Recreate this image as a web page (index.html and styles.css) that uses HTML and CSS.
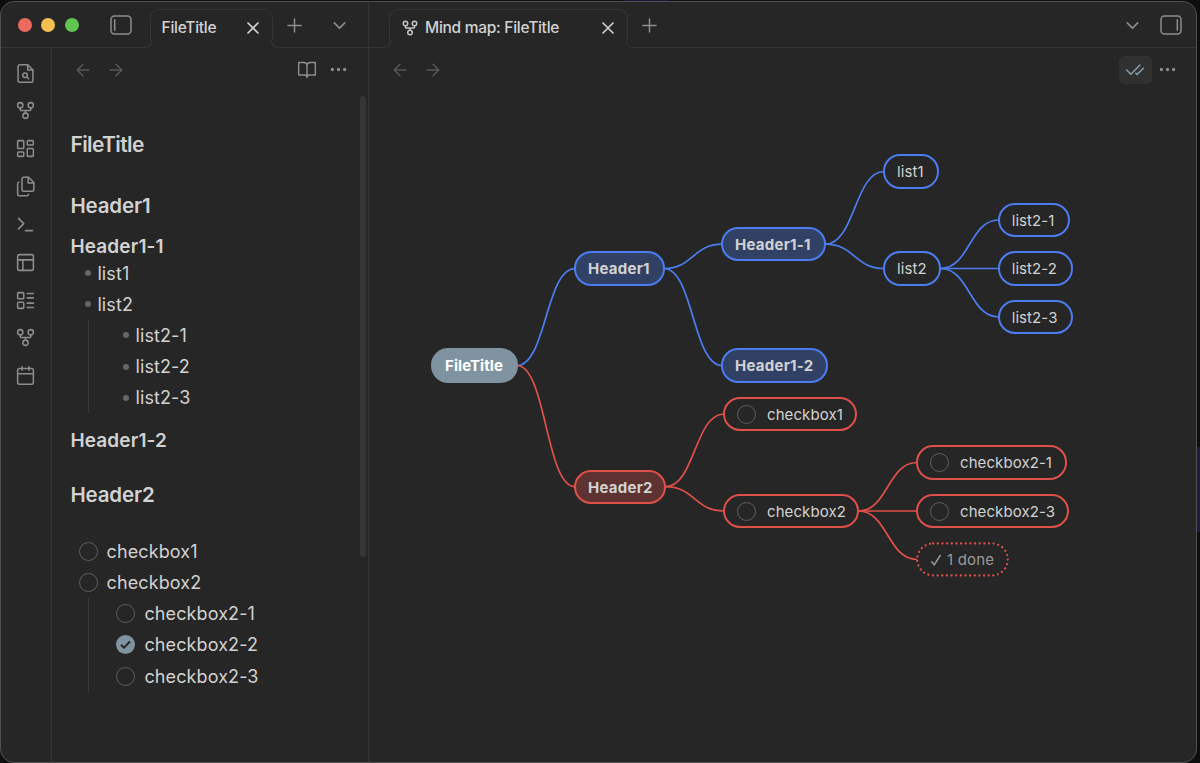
FILE: index.html
```
<!DOCTYPE html>
<html lang="en">
<head>
    <meta charset="UTF-8">
    <meta name="viewport" content="width=device-width, initial-scale=1.0">
    <title>Mind map: FileTitle</title>
    <link rel="stylesheet" href="styles.css">
</head>
<body>
    <!-- shared icons -->
    <svg class="sprite">
        <symbol id="fork" viewBox="0 0 24 24"><circle cx="12" cy="18" r="3"/><circle cx="6" cy="6" r="3"/><circle cx="18" cy="6" r="3"/><path d="M18 9v2c0 .6-.4 1-1 1H7c-.6 0-1-.4-1-1V9M12 12v3"/></symbol>
        <symbol id="close" viewBox="0 0 24 24"><path d="M18 6 6 18M6 6l12 12"/></symbol>
        <symbol id="plus" viewBox="0 0 24 24"><path d="M4.500 12h15M12 4.500v15"/></symbol>
        <symbol id="down" viewBox="0 0 24 24"><path d="m6 9 6 6 6-6"/></symbol>
        <symbol id="back" viewBox="0 0 24 24"><path d="m12 19-7-7 7-7M19 12H5"/></symbol>
        <symbol id="forward" viewBox="0 0 24 24"><path d="M5 12h14M12 5l7 7-7 7"/></symbol>
        <symbol id="dots" viewBox="0 0 24 24"><circle cx="5" cy="12" r="1"/><circle cx="12" cy="12" r="1"/><circle cx="19" cy="12" r="1"/></symbol>
        <symbol id="sidebar" viewBox="0 0 22 20"><rect x="1" y="1" width="20" height="18" rx="3.5"/><path d="M4.700 4.800v10.400"/></symbol>
    </svg>

    <div class="window">
        <header class="titlebar">
            <div class="titlebar-left">
                <div class="lights"><i class="red"></i><i class="yellow"></i><i class="green"></i></div>
                <svg class="icon sidebar-icon"><use href="#sidebar"/></svg>
                <div class="tab tab-file">
                    <span>FileTitle</span>
                    <svg class="icon close"><use href="#close"/></svg>
                </div>
                <svg class="icon new-tab"><use href="#plus"/></svg>
                <svg class="icon tab-list"><use href="#down"/></svg>
            </div>
            <div class="titlebar-right">
                <div class="tab tab-map">
                    <svg class="icon tab-icon"><use href="#fork"/></svg>
                    <span>Mind map: FileTitle</span>
                    <svg class="icon close"><use href="#close"/></svg>
                </div>
                <svg class="icon new-tab"><use href="#plus"/></svg>
                <svg class="icon tab-list"><use href="#down"/></svg>
                <svg class="icon sidebar-icon flip"><use href="#sidebar"/></svg>
            </div>
        </header>

        <div class="workspace">
            <nav class="ribbon">
                <svg class="icon" viewBox="0 0 24 24"><path d="M14.500 2H5.500a2 2 0 0 0-2 2v16a2 2 0 0 0 2 2h13a2 2 0 0 0 2-2V8z"/><path d="M14.500 2v6h6"/><circle cx="11.500" cy="14" r="2.600"/><path d="m13.500 16 2 2"/></svg>
                <svg class="icon"><use href="#fork"/></svg>
                <svg class="icon" viewBox="0 0 24 24"><rect x="3" y="3" width="7" height="9" rx="1"/><rect x="14" y="3" width="7" height="5" rx="1"/><rect x="14" y="12" width="7" height="9" rx="1"/><rect x="3" y="16" width="7" height="5" rx="1"/></svg>
                <svg class="icon" viewBox="0 0 24 24"><path d="M15.500 1.500H10a2 2 0 0 0-2 2v12a2 2 0 0 0 2 2h9.500a2 2 0 0 0 2-2v-8z"/><path d="M15 1.500V8h6.500"/><path d="M4.500 7A2 2 0 0 0 3 9v11.500a2 2 0 0 0 2 2h8.500a2 2 0 0 0 2-1.500"/></svg>
                <svg class="icon" viewBox="0 0 24 24"><path d="m4 17 6-6-6-6M12 19h8"/></svg>
                <svg class="icon" viewBox="0 0 24 24"><rect x="3" y="3" width="18" height="18" rx="2"/><path d="M3 9h18M9 21V9"/></svg>
                <svg class="icon" viewBox="0 0 24 24"><rect x="3" y="3" width="7" height="7" rx="1"/><rect x="3" y="14" width="7" height="7" rx="1"/><path d="M14 4h7M14 9h7M14 15h7M14 20h7"/></svg>
                <svg class="icon"><use href="#fork"/></svg>
                <svg class="icon" viewBox="0 0 24 24"><rect x="3" y="4" width="18" height="18" rx="2"/><path d="M16 2v4M8 2v4M3 10h18"/></svg>
            </nav>

            <section class="pane note">
                <div class="view-header">
                    <svg class="icon nav"><use href="#back"/></svg>
                    <svg class="icon nav"><use href="#forward"/></svg>
                    <svg class="icon book" viewBox="0 0 24 24"><path d="M2 3h6a4 4 0 0 1 4 4v14a3 3 0 0 0-3-3H2zM22 3h-6a4 4 0 0 0-4 4v14a3 3 0 0 1 3-3h7z"/></svg>
                    <svg class="icon more"><use href="#dots"/></svg>
                </div>
                <div class="note-body">
                    <h1>FileTitle</h1>
                    <h2>Header1</h2>
                    <h3>Header1-1</h3>
                    <ul class="bullets">
                        <li>list1</li>
                        <li>list2</li>
                    </ul>
                    <ul class="bullets nested">
                        <li>list2-1</li>
                        <li>list2-2</li>
                        <li>list2-3</li>
                    </ul>
                    <h3 class="spaced">Header1-2</h3>
                    <h2 class="last">Header2</h2>
                    <ul class="tasks">
                        <li><i class="box"></i>checkbox1</li>
                        <li><i class="box"></i>checkbox2</li>
                    </ul>
                    <ul class="tasks nested">
                        <li><i class="box"></i>checkbox2-1</li>
                        <li><svg class="box checked" viewBox="0 0 19 19"><path d="m5 9.800 3 2.900 6-6.200"/></svg>checkbox2-2</li>
                        <li><i class="box"></i>checkbox2-3</li>
                    </ul>
                </div>
                <div class="scrollbar"></div>
            </section>

            <section class="pane map">
                <div class="view-header">
                    <svg class="icon nav"><use href="#back"/></svg>
                    <svg class="icon nav"><use href="#forward"/></svg>
                    <button class="toggle"><svg class="icon" viewBox="0 0 24 24"><path d="M18 6 7 17l-5-5M22 10l-7.500 7.500L13 16"/></svg></button>
                    <svg class="icon more"><use href="#dots"/></svg>
                </div>
                <div class="canvas" id="canvas">
                    <svg class="edges" id="edges"></svg>
                </div>
            </section>
        </div>
    </div>

    <script>
        // x = left edge, y = vertical centre, w = width
        const nodes = [
            { id: "root", text: "FileTitle", x: 62, y: 272.5, w: 86.5, cls: "root" },
            { id: "h1", parent: "root", text: "Header1", x: 205, y: 175.5, w: 90.5, cls: "blue heading" },
            { id: "h1-1", parent: "h1", text: "Header1-1", x: 352, y: 151.2, w: 105, cls: "blue heading" },
            { id: "h1-2", parent: "h1", text: "Header1-2", x: 352, y: 272.5, w: 106.8, cls: "blue heading" },
            { id: "l1", parent: "h1-1", text: "list1", x: 514, y: 78.5, w: 56, cls: "blue" },
            { id: "l2", parent: "h1-1", text: "list2", x: 514, y: 175.5, w: 58, cls: "blue" },
            { id: "l2-1", parent: "l2", text: "list2-1", x: 628.7, y: 127, w: 72.5, cls: "blue" },
            { id: "l2-2", parent: "l2", text: "list2-2", x: 628.7, y: 175.5, w: 75, cls: "blue" },
            { id: "l2-3", parent: "l2", text: "list2-3", x: 628.7, y: 224, w: 75, cls: "blue" },
            { id: "h2", parent: "root", text: "Header2", x: 205, y: 393.7, w: 92, cls: "red heading" },
            { id: "c1", parent: "h2", text: "checkbox1", x: 354, y: 321, w: 134, cls: "red", box: true },
            { id: "c2", parent: "h2", text: "checkbox2", x: 354, y: 418, w: 136, cls: "red", box: true },
            { id: "c2-1", parent: "c2", text: "checkbox2-1", x: 547, y: 369.5, w: 150.5, cls: "red", box: true },
            { id: "c2-3", parent: "c2", text: "checkbox2-3", x: 547, y: 418, w: 153, cls: "red", box: true },
            { id: "done", parent: "c2", text: "1 done", x: 547, y: 466.5, w: 93, cls: "red done" }
        ];

        const canvas = document.getElementById("canvas");
        let paths = "";

        nodes.forEach(node => {
            const el = document.createElement("div");
            el.className = "node " + node.cls;
            el.style.left = node.x + "px";
            el.style.top = (node.y - 17.2) + "px";
            el.style.width = node.w + "px";
            let mark = "";
            if (node.box) mark = '<i class="box"></i>';
            if (node.id === "done") {
                mark = '<svg class="tick" viewBox="0 0 12 12"><path d="m1.200 7.200 3 3.600L10.500 1"/></svg>';
                // dotted outline with even spacing round the corners
                paths += `<rect class="red dotted" x="${node.x + 1.2}" y="${node.y - 16}" width="${node.w - 2.4}" height="32" rx="16"/>`;
            }
            el.innerHTML = mark + "<span>" + node.text + "</span>";
            canvas.appendChild(el);

            const parent = nodes.find(n => n.id === node.parent);
            if (parent) {
                const x1 = parent.x + parent.w - 0.5;
                const x2 = node.x + 1;
                const mid = (x1 + x2) / 2;
                const color = node.cls.includes("blue") ? "blue" : "red";
                paths += `<path class="${color}" d="M${x1} ${parent.y}C${mid} ${parent.y} ${mid} ${node.y} ${x2} ${node.y}"/>`;
            }
        });

        document.getElementById("edges").innerHTML = paths;
    </script>
</body>
</html>
```
FILE: styles.css
```
* {
    box-sizing: border-box;
}
body {
    margin: 0;
    height: 763px;
    padding: 1px 3px 0 0;
    overflow: hidden;
    background:
        linear-gradient(#1f1a3c, #1f1a3c) 1197px 447px / 3px 85px no-repeat,
        linear-gradient(#1f1a3c, #1f1a3c) 623px 0 / 46px 1px no-repeat,
        #0e0e10;
    color: #d2d2d2;
    font-family: 'Inter', 'Liberation Sans', sans-serif;
}
h1, h2, h3, ul {
    margin: 0;
    padding: 0;
}
.sprite {
    display: none;
}
.icon {
    width: 21px;
    height: 21px;
    flex: none;
    fill: none;
    stroke: #8d8d8d;
    stroke-width: 1.75;
    stroke-linecap: round;
    stroke-linejoin: round;
}
.window {
    height: 762px;
    display: flex;
    flex-direction: column;
    background: #262626;
    border: 1px solid #505050;
    border-radius: 14px;
    overflow: hidden;
}

/* title bar */
.titlebar {
    height: 46px;
    flex: none;
    display: flex;
    box-shadow: inset 0 -1px #353535;
}
.titlebar-left {
    width: 368px;
    display: flex;
    align-items: center;
    border-right: 1px solid #353535;
}
.titlebar-right {
    flex: 1;
    display: flex;
    align-items: center;
    padding-left: 20px;
}
.lights {
    display: flex;
    gap: 9.5px;
    margin: 0 31px 0 16.5px;
}
.lights i {
    width: 14.2px;
    height: 14.2px;
    border-radius: 50%;
}
.red {
    background: #ed6a5e;
}
.yellow {
    background: #f5bf4f;
}
.green {
    background: #61c554;
}
.sidebar-icon {
    width: 22px;
    height: 20px;
    stroke-width: 1.5;
}
.flip {
    transform: scaleX(-1);
}
.tab {
    position: relative;
    align-self: flex-end;
    height: 39px;
    display: flex;
    align-items: center;
    padding: 0 9px 3px 11px;
    background: #262626;
    border: 1px solid #353535;
    border-bottom: none;
    border-radius: 9px 9px 0 0;
    font-size: 15.5px;
    font-weight: 500;
    letter-spacing: -0.27px;
}
/* outward curves at the foot of the tab */
.tab::before, .tab::after {
    content: "";
    position: absolute;
    bottom: 0;
    width: 7px;
    height: 7px;
    background: #262626;
    border-bottom: 1px solid #353535;
}
.tab::before {
    left: -7px;
    border-right: 1px solid #353535;
    border-bottom-right-radius: 7px;
    box-shadow: 2px 2px 0 1px #262626;
    clip-path: inset(0 -4px -4px 0);
}
.tab::after {
    right: -7px;
    border-left: 1px solid #353535;
    border-bottom-left-radius: 7px;
    box-shadow: -2px 2px 0 1px #262626;
    clip-path: inset(0 0 -4px -4px);
}
.tab-file {
    width: 123px;
    margin-left: 17.5px;
}
.tab-map {
    width: 239px;
}
.tab-icon {
    width: 18px;
    height: 18px;
    stroke: #c4c4c4;
    stroke-width: 2;
    margin-right: 6px;
}
.close {
    width: 20px;
    height: 20px;
    stroke: #d2d2d2;
    stroke-width: 2;
    margin-left: auto;
}
.new-tab {
    margin-left: 11px;
}
.tab-list {
    margin-left: auto;
    margin-right: 18px;
}
.titlebar-right .tab-list {
    margin-right: 16.5px;
}
.titlebar-right .sidebar-icon {
    margin-right: 14.5px;
}

/* workspace */
.workspace {
    flex: 1;
    display: flex;
    min-height: 0;
}
.ribbon {
    width: 51px;
    display: flex;
    flex-direction: column;
    align-items: center;
    gap: 16.85px;
    padding: 14.500px 2px 0 0;
    border-right: 1px solid #353535;
}
.pane {
    display: flex;
    flex-direction: column;
}
.view-header {
    height: 45px;
    flex: none;
    display: flex;
    align-items: center;
    padding-bottom: 1.500px;
}
.nav {
    width: 20px;
    height: 20px;
    stroke: #585858;
    margin-right: 13.5px;
}
.note {
    position: relative;
    width: 317px;
    border-right: 1px solid #353535;
}
.note .view-header {
    padding-left: 20.5px;
    padding-right: 19px;
}
.book {
    width: 20px;
    height: 20px;
    margin-left: auto;
    margin-right: 11.5px;
}
.more circle, #dots circle {
    fill: #8d8d8d;
}
.note-body {
    padding: 40.5px 18px 0 18.4px;
    font-size: 18px;
    letter-spacing: 0.1px;
}
.note-body h1, .note-body h2, .note-body h3 {
    height: 22px;
    line-height: 22px;
    font-weight: 600;
}
.note-body h1 {
    font-size: 21px;
    letter-spacing: -0.6px;
}
.note-body h2 {
    font-size: 20.5px;
    letter-spacing: -0.15px;
    margin-top: 39px;
}
.note-body h3 {
    font-size: 19px;
    letter-spacing: 0.15px;
    margin-top: 19px;
}
.note-body h3.spaced {
    margin-top: 17px;
}
.note-body h2.last {
    margin-top: 32px;
    margin-bottom: 29.4px;
}
.note-body li {
    display: flex;
    align-items: center;
    height: 31.2px;
}
.bullets li {
    padding-left: 15px;
}
.bullets li::before {
    content: "";
    width: 6px;
    height: 6px;
    margin-right: 6px;
    border-radius: 50%;
    background: #666;
}
.nested {
    margin-left: 17.6px;
    border-left: 1px solid #3a3a3a;
}
.bullets.nested li {
    padding-left: 34.5px;
}
.box {
    width: 19px;
    height: 19px;
    flex: none;
    border: 1px solid #5e5e5e;
    border-radius: 50%;
}
.tasks li {
    gap: 9px;
    padding-left: 8.2px;
}
.tasks.nested li {
    padding-left: 27.5px;
}
.checked {
    background: #7f93a0;
    border: none;
    fill: none;
    stroke: #262626;
    stroke-width: 2;
}
.scrollbar {
    position: absolute;
    top: 48px;
    right: 2px;
    width: 6px;
    height: 461px;
    border-radius: 3px;
    background: #363636;
}

/* mind map */
.map {
    flex: 1;
}
.map .view-header {
    padding-left: 20.5px;
    padding-right: 18.5px;
}
.toggle {
    width: 33px;
    height: 28px;
    display: flex;
    align-items: center;
    justify-content: center;
    margin: 0 5px 0 auto;
    padding: 0;
    border: none;
    border-radius: 5px;
    background: #303030;
}
.toggle .icon {
    width: 20px;
    height: 20px;
    stroke: #8ba0ae;
}
.canvas {
    position: relative;
    flex: 1;
}
.edges {
    position: absolute;
    width: 100%;
    height: 100%;
    fill: none;
    stroke-width: 1.7;
}
.edges .blue {
    stroke: #4b7df0;
}
.edges .red {
    stroke: #df5049;
}
.edges .dotted {
    stroke-width: 2.3;
    stroke-linecap: round;
    stroke-dasharray: 0 4.65;
}
.node {
    position: absolute;
    height: 34.4px;
    display: flex;
    align-items: center;
    padding: 1px 0 0 12px;
    border: 2px solid;
    border-radius: 17.2px;
    background: #262626;
    font-size: 15px;
    letter-spacing: 0.08px;
    white-space: nowrap;
}
.node span {
    color: #d2d2d2;
}
.node.blue {
    border-color: #4b7df0;
}
.node.red {
    border-color: #df5049;
}
.node.heading {
    font-weight: 700;
    letter-spacing: 0.25px;
}
.node.blue.heading {
    background: #314165;
}
.node.red.heading {
    background: #5d3230;
}
.node.root {
    background: #7f93a0;
    border-color: #7f93a0;
    font-weight: 700;
}
.node.root span {
    color: #fff;
}
.node .box {
    margin-right: 11px;
}
.node.done {
    background: none;
    border-color: transparent;
    letter-spacing: 0.2px;
}
.node.done span {
    color: #999;
}
.tick {
    width: 12px;
    height: 12px;
    margin-right: 5px;
    fill: none;
    stroke: #999;
    stroke-width: 1.5;
}
```
